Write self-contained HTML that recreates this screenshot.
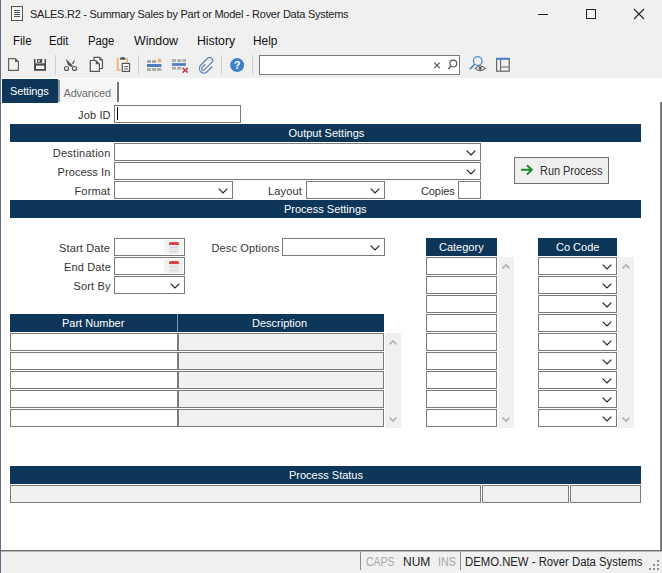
<!DOCTYPE html>
<html><head><meta charset="utf-8">
<style>
*{box-sizing:border-box;margin:0;padding:0}
html,body{width:662px;height:573px;overflow:hidden;background:#f0f0f0;font-family:"Liberation Sans",sans-serif;font-size:11px;color:#222}
.a{position:absolute}
.t{position:absolute;white-space:nowrap;line-height:1}
.band{position:absolute;background:#0d3658}
.in{position:absolute;background:#fff;border:1px solid #7a7a7a}
.ro{background:#f0f0f0}
.sb{position:absolute;background:#f0f0f0}
</style></head><body>
<div class="a" style="left:0;top:0;width:1px;height:573px;background:#5e6f8c"></div>
<svg class="a" style="left:0;top:0" width="30" height="28" viewBox="0 0 30 28">
<rect x="11.5" y="6.5" width="11" height="14" fill="#f4f4f4" stroke="#555" stroke-width="1"/>
<path d="M14 10.5h6M14 12.5h6M14 14.5h6M14 16.5h6" stroke="#555" stroke-width="1"/></svg>
<div id="title" class="t" style="left:30px;top:9px;font-size:11px;color:#222;letter-spacing:-0.26px;">SALES.R2 - Summary Sales by Part or Model - Rover Data Systems</div>
<div class="a" style="left:538px;top:14px;width:10px;height:1px;background:#222"></div>
<div class="a" style="left:586px;top:9px;width:10px;height:10px;border:1px solid #222"></div>
<svg class="a" style="left:633px;top:8px" width="12" height="12" viewBox="0 0 12 12"><path d="M1 1L11 11M11 1L1 11" stroke="#222" stroke-width="1.1"/></svg>
<div id="m_file" class="t" style="left:12.8px;top:34.5px;font-size:12px;color:#111;letter-spacing:0px;transform:scaleX(0.96);transform-origin:0 0">File</div>
<div id="m_edit" class="t" style="left:49px;top:34.5px;font-size:12px;color:#111;letter-spacing:0px;transform:scaleX(0.94);transform-origin:0 0">Edit</div>
<div id="m_page" class="t" style="left:88px;top:34.5px;font-size:12px;color:#111;letter-spacing:0px;transform:scaleX(0.94);transform-origin:0 0">Page</div>
<div id="m_win" class="t" style="left:134px;top:34.5px;font-size:12px;color:#111;letter-spacing:0px;transform:scaleX(1.03);transform-origin:0 0">Window</div>
<div id="m_hist" class="t" style="left:196.8px;top:34.5px;font-size:12px;color:#111;letter-spacing:0px;transform:scaleX(1.02);transform-origin:0 0">History</div>
<div id="m_help" class="t" style="left:253.2px;top:34.5px;font-size:12px;color:#111;letter-spacing:0px;transform:scaleX(0.99);transform-origin:0 0">Help</div>
<div class="in" style="left:259px;top:55px;width:201px;height:20px"></div>
<svg class="a" style="left:0;top:50px" width="662" height="28" viewBox="0 50 662 28">
<!-- new doc -->
<path d="M8.6 58.6H15.2L18.4 61.8V70.4H8.6Z" fill="#f2f2f2" stroke="#5e5e5e" stroke-width="1.15"/>
<path d="M15 58.6V62H18.4Z" fill="#5a5a5a"/>
<!-- save -->
<path d="M34 59H46V70.8H34Z" fill="#4a4a4a"/>
<rect x="35.5" y="59" width="9" height="4.4" fill="#f8f8f8"/>
<rect x="37" y="59" width="5.2" height="3.8" fill="#4a4a4a"/>
<rect x="38.2" y="59.8" width="1.4" height="2.2" fill="#f8f8f8"/>
<rect x="36" y="65.6" width="8.2" height="3.4" fill="#f8f8f8"/>
<!-- separators -->
<rect x="55" y="55" width="1" height="20" fill="#cfcfcf"/>
<rect x="138" y="55" width="1" height="20" fill="#cfcfcf"/>
<rect x="221" y="55" width="1" height="20" fill="#cfcfcf"/>
<rect x="252" y="55" width="1" height="20" fill="#cfcfcf"/>
<!-- scissors -->
<path d="M65.7 58.7L73.2 66.1L71.2 66.9L67.8 64.8Z" fill="#505050"/>
<path d="M75.1 59.1L73.6 63.7L71.7 63.5Z" fill="#505050"/>
<circle cx="66.5" cy="68.5" r="2" fill="none" stroke="#505050" stroke-width="1.1"/>
<circle cx="74.5" cy="68.5" r="2" fill="none" stroke="#505050" stroke-width="1.1"/>
<!-- copy -->
<path d="M94 57.3H99.6L102.5 60.2V68.5H94Z" fill="#f4f4f4" stroke="#555" stroke-width="1.2"/>
<path d="M99.4 57.3V60.4H102.5Z" fill="#555"/>
<path d="M90.3 60.5H95.9L99.4 64V71.4H90.3Z" fill="#f4f4f4" stroke="#555" stroke-width="1.2"/>
<path d="M95.7 60.5V64.2H99.4Z" fill="#555"/>
<!-- paste -->
<path d="M117.6 57.8V70H120.6M127.2 58V62.6" fill="none" stroke="#e8b06a" stroke-width="1.7"/>
<path d="M120 59.8V58.6Q120 57 122.7 57Q125.4 57 125.4 58.6V59.8Z" fill="#555"/>
<rect x="122.3" y="63.4" width="7.2" height="8" fill="#fafafa" stroke="#555" stroke-width="1.2"/>
<rect x="124.2" y="66" width="3.6" height="1" fill="#555"/>
<rect x="124.2" y="68.4" width="3.6" height="1" fill="#555"/>
<!-- insert row grid -->
<g fill="#ababab"><rect x="147" y="60" width="4" height="3"/><rect x="152" y="60" width="4" height="3"/>
<rect x="147" y="68" width="4" height="3"/><rect x="152" y="68" width="4" height="3"/><rect x="157" y="68" width="4.4" height="3"/></g>
<circle cx="159.4" cy="60.7" r="2.1" fill="#e6bc7c"/>
<rect x="147" y="64" width="14.4" height="3" fill="#4d7dbd"/>
<!-- delete row grid -->
<g fill="#ababab"><rect x="172" y="59.2" width="4" height="2.7"/><rect x="177.2" y="59.2" width="4" height="2.7"/><rect x="182.4" y="59.2" width="3.6" height="2.7"/>
<rect x="172" y="66.8" width="4" height="2.8"/><rect x="177.2" y="66.8" width="4" height="2.8"/></g>
<rect x="172" y="63.1" width="14" height="2.7" fill="#4d7dbd"/>
<path d="M182.6 67.9L187.8 72.6M187.8 67.9L182.6 72.6" stroke="#c83a48" stroke-width="1.5"/>
<!-- paperclip -->
<g transform="translate(0.8 0.5)"><path d="M204.5 63.8L201.2 67.1A1.6 1.6 0 0 0 203.5 69.4L211 61.9A2.9 2.9 0 0 0 206.9 57.8L199.9 64.8A4.5 4.5 0 0 0 206.3 71.2L211.5 66" fill="none" stroke="#6384b6" stroke-width="1.25"/></g>
<!-- help -->
<circle cx="237.1" cy="65.1" r="7" fill="#4080c4"/>
<text x="237.1" y="69.3" text-anchor="middle" font-family="Liberation Sans" font-weight="bold" font-size="10.5" fill="#fff">?</text>
<!-- search box glyphs -->
<path d="M434.2 62.6L439.8 68.2M439.8 62.6L434.2 68.2" stroke="#555" stroke-width="1.2"/>
<circle cx="453.3" cy="63.6" r="3.4" fill="none" stroke="#555" stroke-width="1.2"/>
<path d="M450.9 66.1L448.3 69" stroke="#555" stroke-width="1.4"/>
<!-- search eye -->
<circle cx="477.7" cy="61" r="4.3" fill="none" stroke="#5b8cc8" stroke-width="1.3"/>
<path d="M474.6 64.3L469.8 69.2" stroke="#5b8cc8" stroke-width="1.9"/>
<path d="M475.3 68.3Q480.2 63.6 485.2 68.3Q480.2 73 475.3 68.3Z" fill="#f0f0f0" stroke="#666" stroke-width="1.1"/>
<circle cx="480.2" cy="68.3" r="1.5" fill="#555"/>
<!-- layout -->
<rect x="496.6" y="58.6" width="12.6" height="12.6" fill="none" stroke="#666" stroke-width="1.2"/>
<rect x="496" y="57.7" width="13.8" height="2.2" fill="#5286c6"/>
<path d="M500.6 59.6V71M500.6 67H509.2" stroke="#666" stroke-width="1.1"/>
</svg>
<div class="a" style="left:1px;top:78px;width:661px;height:473px;background:#fff"></div>
<div class="a" style="left:59px;top:79px;width:59px;height:23px;background:#f6f6f6"></div>
<div class="a" style="left:660px;top:102px;width:1px;height:449px;background:#8a8a8a"></div>
<div class="a" style="left:661px;top:102px;width:1px;height:449px;background:#666"></div>
<div class="a" style="left:1px;top:550px;width:661px;height:1px;background:#6e6e6e"></div>
<div class="a" style="left:1px;top:551px;width:661px;height:1px;background:#b8b8b8"></div>
<div class="a" style="left:2px;top:79px;width:56px;height:24px;background:#0d3658"></div>
<div class="a" style="left:58px;top:80px;width:1.5px;height:22px;background:#8797a6"></div>
<div id="tab_set" class="t" style="left:10px;top:85.8px;font-size:11px;color:#fff;letter-spacing:-0.15px;">Settings</div>
<div id="tab_adv" class="t" style="left:63.5px;top:87.6px;font-size:11px;color:#6d6d6d;letter-spacing:-0.2px;">Advanced</div>
<div class="a" style="left:117px;top:82px;width:2px;height:20px;background:#777"></div>
<div id="l_job" class="t" style="left:78px;top:110px;font-size:11px;color:#333;letter-spacing:0.15px;">Job ID</div>
<div class="in" style="left:114px;top:105px;width:127px;height:18px"></div>
<div class="a" style="left:117px;top:107px;width:1px;height:13px;background:#000"></div>
<div class="band" style="left:10px;top:124px;width:631px;height:18px"></div>
<div class="band" style="left:10px;top:200px;width:631px;height:18px"></div>
<div class="band" style="left:10px;top:466px;width:631px;height:18px"></div>
<div id="b_out" class="t" style="left:288.5px;top:127.8px;font-size:11px;color:#fff;letter-spacing:0px;">Output Settings</div>
<div id="b_proc" class="t" style="left:284px;top:203.8px;font-size:11px;color:#fff;letter-spacing:0px;">Process Settings</div>
<div id="b_stat" class="t" style="left:289px;top:469.8px;font-size:11px;color:#fff;letter-spacing:0px;">Process Status</div>
<div id="l_dest" class="t" style="left:52.8px;top:148px;font-size:11px;color:#333;letter-spacing:0.25px;">Destination</div>
<div class="in" style="left:114px;top:143px;width:367px;height:18px"></div>
<svg class="a" style="left:466px;top:150px" width="10" height="6" viewBox="0 0 10 6"><path d="M0.7 0.7L5 5L9.3 0.7" fill="none" stroke="#222" stroke-width="1.2"/></svg>
<div id="l_proc" class="t" style="left:57.5px;top:167px;font-size:11px;color:#333;letter-spacing:0.1px;">Process In</div>
<div class="in" style="left:114px;top:162px;width:367px;height:18px"></div>
<svg class="a" style="left:466px;top:169px" width="10" height="6" viewBox="0 0 10 6"><path d="M0.7 0.7L5 5L9.3 0.7" fill="none" stroke="#222" stroke-width="1.2"/></svg>
<div id="l_fmt" class="t" style="left:74.5px;top:186px;font-size:11px;color:#333;letter-spacing:0.15px;">Format</div>
<div class="in" style="left:114px;top:181px;width:119px;height:18px"></div>
<svg class="a" style="left:218px;top:188px" width="10" height="6" viewBox="0 0 10 6"><path d="M0.7 0.7L5 5L9.3 0.7" fill="none" stroke="#222" stroke-width="1.2"/></svg>
<div id="l_lay" class="t" style="left:268px;top:186px;font-size:11px;color:#333;letter-spacing:0.15px;">Layout</div>
<div class="in" style="left:306px;top:181px;width:79px;height:18px"></div>
<svg class="a" style="left:370px;top:188px" width="10" height="6" viewBox="0 0 10 6"><path d="M0.7 0.7L5 5L9.3 0.7" fill="none" stroke="#222" stroke-width="1.2"/></svg>
<div id="l_cop" class="t" style="left:421px;top:186px;font-size:11px;color:#333;letter-spacing:-0.1px;">Copies</div>
<div class="in" style="left:458px;top:181px;width:23px;height:18px"></div>
<div class="a" style="left:514px;top:157px;width:95px;height:27px;background:#efefef;border:1px solid #707070"></div>
<svg class="a" style="left:520px;top:164px" width="14" height="12" viewBox="0 0 14 12"><path d="M1 5.8H12M7 1.3L11.8 5.8L7 10.5" fill="none" stroke="#1c8c2c" stroke-width="2"/></svg>
<div id="l_run" class="t" style="left:540px;top:164.6px;font-size:12px;color:#333;letter-spacing:0px;transform:scaleX(0.91);transform-origin:0 0">Run Process</div>
<div id="l_sd" class="t" style="left:59px;top:243px;font-size:11px;color:#333;letter-spacing:0.15px;">Start Date</div>
<div class="in" style="left:114px;top:238px;width:71px;height:18px"></div>
<div id="l_ed" class="t" style="left:64px;top:262px;font-size:11px;color:#333;letter-spacing:0.15px;">End Date</div>
<div class="in" style="left:114px;top:257px;width:71px;height:18px"></div>
<div id="l_sb" class="t" style="left:73.5px;top:281px;font-size:11px;color:#333;letter-spacing:0.15px;">Sort By</div>
<div class="in" style="left:114px;top:276px;width:71px;height:18px"></div>
<svg class="a" style="left:170px;top:283px" width="10" height="6" viewBox="0 0 10 6"><path d="M0.7 0.7L5 5L9.3 0.7" fill="none" stroke="#222" stroke-width="1.2"/></svg>
<div id="l_do" class="t" style="left:211.5px;top:243px;font-size:11px;color:#333;letter-spacing:0.15px;">Desc Options</div>
<div class="in" style="left:282px;top:238px;width:103px;height:18px"></div>
<svg class="a" style="left:370px;top:245px" width="10" height="6" viewBox="0 0 10 6"><path d="M0.7 0.7L5 5L9.3 0.7" fill="none" stroke="#222" stroke-width="1.2"/></svg>
<div class="a" style="left:164px;top:240px;width:19px;height:14px;background:#f1f2f2"></div>
<div class="a" style="left:168.5px;top:242px;width:10.5px;height:3.2px;background:#d6454a;border-radius:1.5px 1.5px 0 0"></div>
<div class="a" style="left:169px;top:245.2px;width:10px;height:8px;background:#e6e8ea"></div>
<div class="a" style="left:170px;top:247px;width:8px;height:1px;background:#d4d4e4"></div>
<div class="a" style="left:170px;top:251px;width:8px;height:1px;background:#d4e0d4"></div>
<div class="a" style="left:164px;top:259px;width:19px;height:14px;background:#f1f2f2"></div>
<div class="a" style="left:168.5px;top:261px;width:10.5px;height:3.2px;background:#d6454a;border-radius:1.5px 1.5px 0 0"></div>
<div class="a" style="left:169px;top:264.2px;width:10px;height:8px;background:#e6e8ea"></div>
<div class="a" style="left:170px;top:266px;width:8px;height:1px;background:#d4d4e4"></div>
<div class="a" style="left:170px;top:270px;width:8px;height:1px;background:#d4e0d4"></div>
<div class="band" style="left:426px;top:238px;width:71px;height:18px"></div>
<div class="band" style="left:538px;top:238px;width:79px;height:18px"></div>
<div id="h_cat" class="t" style="left:439px;top:242px;font-size:11px;color:#fff;letter-spacing:0px;">Category</div>
<div id="h_co" class="t" style="left:556px;top:242px;font-size:11px;color:#fff;letter-spacing:0px;">Co Code</div>
<div class="sb" style="left:499px;top:257px;width:15px;height:171px"></div>
<div class="sb" style="left:618px;top:257px;width:16px;height:171px"></div>
<div class="in" style="left:426px;top:257px;width:71px;height:18px"></div>
<div class="in" style="left:538px;top:257px;width:79px;height:18px"></div>
<svg class="a" style="left:602px;top:264px" width="10" height="6" viewBox="0 0 10 6"><path d="M0.7 0.7L5 5L9.3 0.7" fill="none" stroke="#222" stroke-width="1.2"/></svg>
<div class="in" style="left:426px;top:276px;width:71px;height:18px"></div>
<div class="in" style="left:538px;top:276px;width:79px;height:18px"></div>
<svg class="a" style="left:602px;top:283px" width="10" height="6" viewBox="0 0 10 6"><path d="M0.7 0.7L5 5L9.3 0.7" fill="none" stroke="#222" stroke-width="1.2"/></svg>
<div class="in" style="left:426px;top:295px;width:71px;height:18px"></div>
<div class="in" style="left:538px;top:295px;width:79px;height:18px"></div>
<svg class="a" style="left:602px;top:302px" width="10" height="6" viewBox="0 0 10 6"><path d="M0.7 0.7L5 5L9.3 0.7" fill="none" stroke="#222" stroke-width="1.2"/></svg>
<div class="in" style="left:426px;top:314px;width:71px;height:18px"></div>
<div class="in" style="left:538px;top:314px;width:79px;height:18px"></div>
<svg class="a" style="left:602px;top:321px" width="10" height="6" viewBox="0 0 10 6"><path d="M0.7 0.7L5 5L9.3 0.7" fill="none" stroke="#222" stroke-width="1.2"/></svg>
<div class="in" style="left:426px;top:333px;width:71px;height:18px"></div>
<div class="in" style="left:538px;top:333px;width:79px;height:18px"></div>
<svg class="a" style="left:602px;top:340px" width="10" height="6" viewBox="0 0 10 6"><path d="M0.7 0.7L5 5L9.3 0.7" fill="none" stroke="#222" stroke-width="1.2"/></svg>
<div class="in" style="left:426px;top:352px;width:71px;height:18px"></div>
<div class="in" style="left:538px;top:352px;width:79px;height:18px"></div>
<svg class="a" style="left:602px;top:359px" width="10" height="6" viewBox="0 0 10 6"><path d="M0.7 0.7L5 5L9.3 0.7" fill="none" stroke="#222" stroke-width="1.2"/></svg>
<div class="in" style="left:426px;top:371px;width:71px;height:18px"></div>
<div class="in" style="left:538px;top:371px;width:79px;height:18px"></div>
<svg class="a" style="left:602px;top:378px" width="10" height="6" viewBox="0 0 10 6"><path d="M0.7 0.7L5 5L9.3 0.7" fill="none" stroke="#222" stroke-width="1.2"/></svg>
<div class="in" style="left:426px;top:390px;width:71px;height:18px"></div>
<div class="in" style="left:538px;top:390px;width:79px;height:18px"></div>
<svg class="a" style="left:602px;top:397px" width="10" height="6" viewBox="0 0 10 6"><path d="M0.7 0.7L5 5L9.3 0.7" fill="none" stroke="#222" stroke-width="1.2"/></svg>
<div class="in" style="left:426px;top:409px;width:71px;height:18px"></div>
<div class="in" style="left:538px;top:409px;width:79px;height:18px"></div>
<svg class="a" style="left:602px;top:416px" width="10" height="6" viewBox="0 0 10 6"><path d="M0.7 0.7L5 5L9.3 0.7" fill="none" stroke="#222" stroke-width="1.2"/></svg>
<svg class="a" style="left:502px;top:264px" width="8" height="5" viewBox="0 0 10 6"><path d="M0.7 5.3L5 1L9.3 5.3" fill="none" stroke="#b4b4b4" stroke-width="2.2"/></svg>
<svg class="a" style="left:502px;top:417px" width="8" height="5" viewBox="0 0 10 6"><path d="M0.7 0.7L5 5L9.3 0.7" fill="none" stroke="#b4b4b4" stroke-width="2.2"/></svg>
<svg class="a" style="left:622px;top:264px" width="8" height="5" viewBox="0 0 10 6"><path d="M0.7 5.3L5 1L9.3 5.3" fill="none" stroke="#b4b4b4" stroke-width="2.2"/></svg>
<svg class="a" style="left:622px;top:417px" width="8" height="5" viewBox="0 0 10 6"><path d="M0.7 0.7L5 5L9.3 0.7" fill="none" stroke="#b4b4b4" stroke-width="2.2"/></svg>
<div class="band" style="left:10px;top:314px;width:374px;height:18px"></div>
<div class="a" style="left:177px;top:314px;width:1px;height:18px;background:#6d9bd0"></div>
<div id="h_pn" class="t" style="left:62px;top:318px;font-size:11px;color:#fff;letter-spacing:0px;">Part Number</div>
<div id="h_de" class="t" style="left:252px;top:318px;font-size:11px;color:#fff;letter-spacing:0px;">Description</div>
<div class="sb" style="left:385px;top:333px;width:16px;height:95px"></div>
<div class="in" style="left:10px;top:333px;width:168px;height:18px"></div>
<div class="in ro" style="left:178px;top:333px;width:206px;height:18px"></div>
<div class="in" style="left:10px;top:352px;width:168px;height:18px"></div>
<div class="in ro" style="left:178px;top:352px;width:206px;height:18px"></div>
<div class="in" style="left:10px;top:371px;width:168px;height:18px"></div>
<div class="in ro" style="left:178px;top:371px;width:206px;height:18px"></div>
<div class="in" style="left:10px;top:390px;width:168px;height:18px"></div>
<div class="in ro" style="left:178px;top:390px;width:206px;height:18px"></div>
<div class="in" style="left:10px;top:409px;width:168px;height:18px"></div>
<div class="in ro" style="left:178px;top:409px;width:206px;height:18px"></div>
<svg class="a" style="left:389px;top:340px" width="8" height="5" viewBox="0 0 10 6"><path d="M0.7 5.3L5 1L9.3 5.3" fill="none" stroke="#b4b4b4" stroke-width="2.2"/></svg>
<svg class="a" style="left:389px;top:417px" width="8" height="5" viewBox="0 0 10 6"><path d="M0.7 0.7L5 5L9.3 0.7" fill="none" stroke="#b4b4b4" stroke-width="2.2"/></svg>
<div class="in ro" style="left:10px;top:485px;width:471px;height:18px"></div>
<div class="in ro" style="left:482px;top:485px;width:87px;height:18px"></div>
<div class="in ro" style="left:570px;top:485px;width:71px;height:18px"></div>
<div class="a" style="left:360px;top:552px;width:1px;height:18px;background:#8a8a8a"></div>
<div class="a" style="left:460px;top:552px;width:1px;height:18px;background:#8a8a8a"></div>
<div id="s_caps" class="t" style="left:365.5px;top:556.2px;font-size:12px;color:#a8a8a8;letter-spacing:0px;transform:scaleX(0.875);transform-origin:0 0">CAPS</div>
<div id="s_num" class="t" style="left:403px;top:556.2px;font-size:12px;color:#222;letter-spacing:0px;transform:scaleX(1.0);transform-origin:0 0">NUM</div>
<div id="s_ins" class="t" style="left:437.5px;top:556.2px;font-size:12px;color:#a8a8a8;letter-spacing:0px;transform:scaleX(0.9);transform-origin:0 0">INS</div>
<div id="s_demo" class="t" style="left:465px;top:556.2px;font-size:12px;color:#222;letter-spacing:0px;transform:scaleX(0.944);transform-origin:0 0">DEMO.NEW - Rover Data Systems</div>
<svg class="a" style="left:648px;top:560px" width="12" height="12" viewBox="0 0 12 12"><g fill="#8c8c8c"><rect x="9" y="0" width="2" height="2"/><rect x="5" y="4" width="2" height="2"/><rect x="9" y="4" width="2" height="2"/><rect x="1" y="8" width="2" height="2"/><rect x="5" y="8" width="2" height="2"/><rect x="9" y="8" width="2" height="2"/></g></svg>
</body></html>
